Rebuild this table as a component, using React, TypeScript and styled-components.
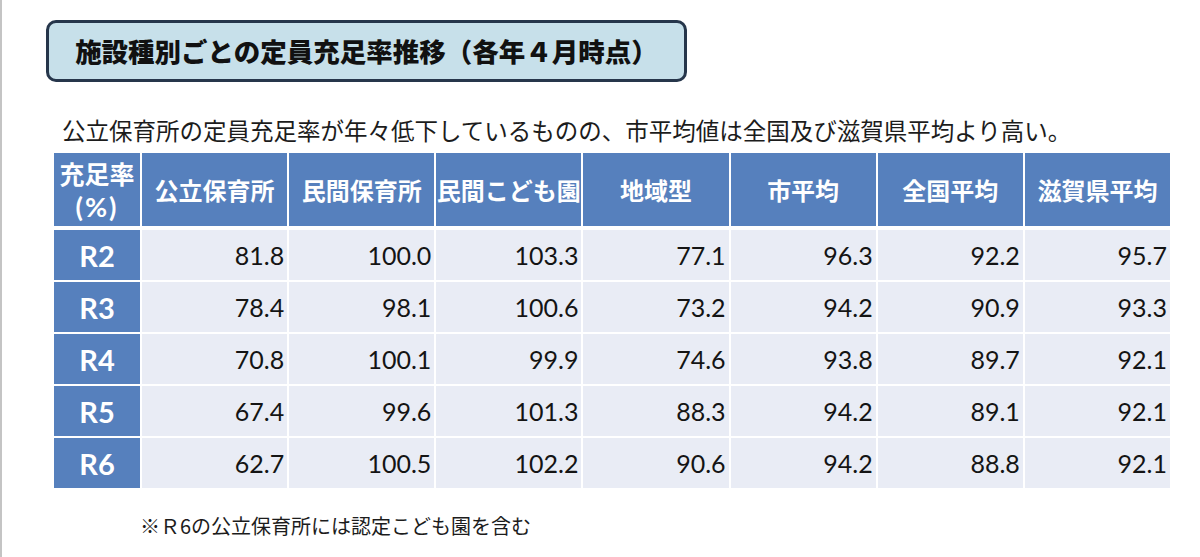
import styled, { createGlobalStyle } from 'styled-components';

const GlobalStyle = createGlobalStyle`
    html, body {
        margin: 0;
        padding: 0;
        background: #ffffff;
    }
    body {
        font-family: "Noto Sans CJK JP", "Noto Sans", sans-serif;
        color: #1a1a1a;
    }
`;

const Slide = styled.div`
    width: 1200px;
    height: 557px;
    box-sizing: border-box;
    border-left: 2px solid #c4c4c4;
    padding: 20px 0 0 44px;
    overflow: hidden;
`;

const TitleBox = styled.div`
    width: 641px;
    height: 62px;
    box-sizing: border-box;
    display: flex;
    align-items: center;
    justify-content: center;
    background: #c7e0ea;
    border: 3px solid #26364b;
    border-radius: 10px;
`;

const TitleText = styled.h1`
    margin: 0;
    font-size: 26.5px;
    font-weight: 900;
    color: #111;
    line-height: 1;
`;

const Lead = styled.p`
    margin: 33px 0 8px 16px;
    font-size: 23.5px;
    line-height: 30px;
    color: #1c1c1c;
    white-space: nowrap;
`;

const Grid = styled.div`
    margin-left: 8px;
    width: 1116px;
    display: grid;
    grid-template-columns: 86px repeat(7, 1fr);
    grid-auto-rows: 50px;
    grid-template-rows: 75px;
    column-gap: 2px;
    row-gap: 2px;
`;

const HeadCell = styled.div`
    background: #5680bd;
    color: #ffffff;
    font-weight: 700;
    font-size: 24px;
    line-height: 1;
    display: flex;
    flex-direction: column;
    align-items: center;
    justify-content: center;
    text-align: center;
    white-space: nowrap;
    margin-bottom: 2px;
`;

const HeadLine = styled.span<{ $latin?: boolean }>`
    display: block;
    font-family: ${p => (p.$latin ? 'Lato, "Noto Sans", sans-serif' : 'inherit')};
    font-size: ${p => (p.$latin ? '27px' : '25px')};
    letter-spacing: ${p => (p.$latin ? '2px' : '0')};
    line-height: 33px;
`;

const RowLabel = styled.div`
    background: #5680bd;
    color: #ffffff;
    font-family: Lato, "Noto Sans", sans-serif;
    font-weight: 700;
    font-size: 29px;
    display: flex;
    align-items: center;
    justify-content: center;
`;

const ValueCell = styled.div`
    background: #e9ecf5;
    color: #141414;
    font-family: Lato, "Noto Sans", sans-serif;
    font-size: 25px;
    display: flex;
    align-items: center;
    justify-content: flex-end;
    padding-right: 3px;
`;

const Note = styled.p`
    margin: 25px 0 0 94px;
    font-size: 20px;
    line-height: 26px;
    color: #1c1c1c;
`;

const columns = ['公立保育所', '民間保育所', '民間こども園', '地域型', '市平均', '全国平均', '滋賀県平均'];

const rows: { year: string; values: string[] }[] = [
    { year: 'R2', values: ['81.8', '100.0', '103.3', '77.1', '96.3', '92.2', '95.7'] },
    { year: 'R3', values: ['78.4', '98.1', '100.6', '73.2', '94.2', '90.9', '93.3'] },
    { year: 'R4', values: ['70.8', '100.1', '99.9', '74.6', '93.8', '89.7', '92.1'] },
    { year: 'R5', values: ['67.4', '99.6', '101.3', '88.3', '94.2', '89.1', '92.1'] },
    { year: 'R6', values: ['62.7', '100.5', '102.2', '90.6', '94.2', '88.8', '92.1'] },
];

const App = () => {
    return (
        <>
            <GlobalStyle />
            <Slide>
                <TitleBox>
                    <TitleText>施設種別ごとの定員充足率推移（各年４月時点）</TitleText>
                </TitleBox>
                <Lead>公立保育所の定員充足率が年々低下しているものの、市平均値は全国及び滋賀県平均より高い。</Lead>
                <Grid>
                    <HeadCell>
                        <HeadLine>充足率</HeadLine>
                        <HeadLine $latin>(%)</HeadLine>
                    </HeadCell>
                    {columns.map(c => (
                        <HeadCell key={c}>{c}</HeadCell>
                    ))}
                    {rows.map(r => [
                        <RowLabel key={r.year}>{r.year}</RowLabel>,
                        ...r.values.map((v, i) => <ValueCell key={r.year + i}>{v}</ValueCell>),
                    ])}
                </Grid>
                <Note>※Ｒ6の公立保育所には認定こども園を含む</Note>
            </Slide>
        </>
    );
};

export default App;
